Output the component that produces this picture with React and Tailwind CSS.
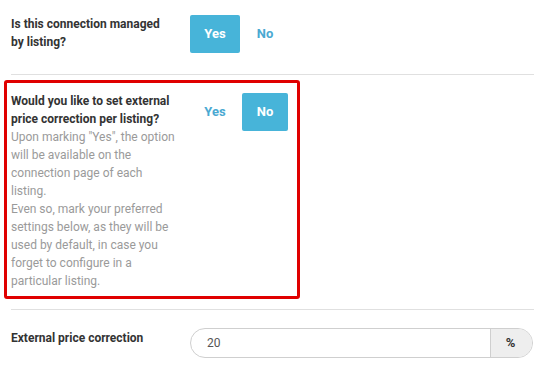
import React from "react";

function Choice({ selected }) {
  const base = "h-[38px] flex items-center justify-center text-[13px] font-bold rounded-[2px]";
  return (
    <div className="flex items-start gap-[2px]">
      <div className={`${base} w-[50px] ${selected === "yes" ? "bg-[#47b4d9] text-white" : "text-[#4aa9d2]"}`}>Yes</div>
      <div className={`${base} w-[46px] ${selected === "no" ? "bg-[#47b4d9] text-white" : "text-[#4aa9d2]"}`}>No</div>
    </div>
  );
}

export default function App() {
  return (
    <div className="w-[548px] h-[379px] bg-white pt-[15px] overflow-hidden" style={{ fontFamily: "Roboto, 'Liberation Sans', sans-serif" }}>
      <div className="flex items-start pl-[11px]">
        <div className="w-[179px] pr-[22px] text-[12px] leading-[18px] font-bold text-[#333]">
          Is this connection managed by listing?
        </div>
        <Choice selected="yes" />
      </div>
      <div className="ml-[11px] mr-[14px] mt-[21px] h-px bg-[#e0e0e0]" />
      <div className="ml-[4px] mt-[5px] w-[296px] border-[3px] border-[#e00000] rounded-[3px] pt-[9px] pb-[6px] flex items-start">
        <div className="w-[183px] pl-[4px] pr-[15px] text-[12px] leading-[18px]">
          <div className="font-bold text-[#333]">Would you like to set external price correction per listing?</div>
          <div className="text-[#9a9a9a]">
            Upon marking "Yes", the option will be available on the connection page of each listing.
            <br />
            Even so, mark your preferred settings below, as they will be used by default, in case you forget to configure in a particular listing.
          </div>
        </div>
        <div className="pt-px">
          <Choice selected="no" />
        </div>
      </div>
      <div className="ml-[11px] mr-[14px] mt-[10px] h-px bg-[#e0e0e0]" />
      <div className="flex items-start pl-[11px] mt-[18px]">
        <div className="w-[179px] text-[12px] leading-[18px] font-bold text-[#333] pt-px">External price correction</div>
        <div className="w-[343px] h-[30px] flex border border-[#cfcfcf] rounded-full overflow-hidden">
          <div className="flex-1 flex items-center pl-[16px] text-[12px] text-[#555]">20</div>
          <div className="w-[42px] flex items-center justify-center bg-[#eeeeee] border-l border-[#cfcfcf] text-[13px] font-bold text-[#333] pr-[2px]">%</div>
        </div>
      </div>
    </div>
  );
}
